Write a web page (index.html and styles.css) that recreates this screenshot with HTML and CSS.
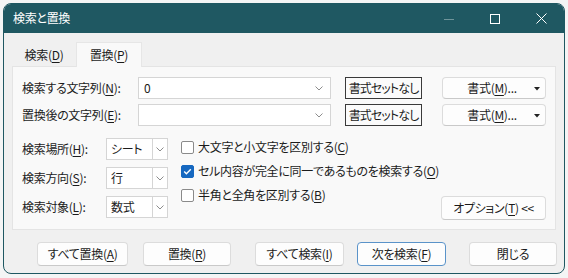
FILE: index.html
```html
<!DOCTYPE html>
<html lang="ja">
<head>
<meta charset="utf-8">
<title>検索と置換</title>
<link rel="stylesheet" href="styles.css">
</head>
<body>
<div class="window">
  <div class="titlebar">
    <span class="title">検索と置換</span>
    <div class="controls">
      <span class="ctl"><svg width="10" height="10" viewBox="0 0 10 10"><line x1="0" y1="5.5" x2="10" y2="5.5" class="dim"/></svg></span>
      <span class="ctl"><svg width="10" height="10" viewBox="0 0 10 10"><rect x="0.5" y="0.5" width="9" height="9" class="stk"/></svg></span>
      <span class="ctl"><svg width="11" height="11" viewBox="0 0 11 11"><path d="M0.5 0.5 L10.5 10.5 M10.5 0.5 L0.5 10.5" class="stk"/></svg></span>
    </div>
  </div>
  <div class="client">
    <div class="tabs">
      <div class="tab">検索(<u>D</u>)</div>
      <div class="tab active">置換(<u>P</u>)</div>
    </div>
    <div class="panel">
      <div class="row">
        <label class="lbl">検索する文字列(<u>N</u>):</label>
        <div class="combo"><span class="val">0</span><svg class="chev" width="8" height="5" viewBox="0 0 8 5"><polyline points="0.5,0.5 4,4 7.5,0.5"/></svg></div>
        <div class="preview">書式セットなし</div>
        <div class="btn fmt"><span>書式(<u>M</u>)...</span><svg class="tri" width="6" height="4" viewBox="0 0 6 4"><polygon points="0,0 6,0 3,3.5"/></svg></div>
      </div>
      <div class="row row2">
        <label class="lbl">置換後の文字列(<u>E</u>):</label>
        <div class="combo"><span class="val"></span><svg class="chev" width="8" height="5" viewBox="0 0 8 5"><polyline points="0.5,0.5 4,4 7.5,0.5"/></svg></div>
        <div class="preview">書式セットなし</div>
        <div class="btn fmt"><span>書式(<u>M</u>)...</span><svg class="tri" width="6" height="4" viewBox="0 0 6 4"><polygon points="0,0 6,0 3,3.5"/></svg></div>
      </div>
      <div class="opts">
        <div class="selects">
          <div class="srow"><label class="slbl">検索場所(<u>H</u>):</label><div class="select"><span class="sval">シート</span><span class="sarr"><svg class="chev" width="8" height="5" viewBox="0 0 8 5"><polyline points="0.5,0.5 4,4 7.5,0.5"/></svg></span></div></div>
          <div class="srow"><label class="slbl">検索方向(<u>S</u>):</label><div class="select"><span class="sval">行</span><span class="sarr"><svg class="chev" width="8" height="5" viewBox="0 0 8 5"><polyline points="0.5,0.5 4,4 7.5,0.5"/></svg></span></div></div>
          <div class="srow"><label class="slbl">検索対象(<u>L</u>):</label><div class="select"><span class="sval">数式</span><span class="sarr"><svg class="chev" width="8" height="5" viewBox="0 0 8 5"><polyline points="0.5,0.5 4,4 7.5,0.5"/></svg></span></div></div>
        </div>
        <div class="checks">
          <div class="chk"><span class="box"></span><span>大文字と小文字を区別する(<u>C</u>)</span></div>
          <div class="chk"><span class="box on"><svg width="13" height="13" viewBox="0 0 13 13"><path d="M3.2 6.6 L5.4 8.8 L9.8 4.3"/></svg></span><span>セル内容が完全に同一であるものを検索する(<u>O</u>)</span></div>
          <div class="chk"><span class="box"></span><span>半角と全角を区別する(<u>B</u>)</span></div>
        </div>
        <div class="btn optbtn">オプション(<u>T</u>) &lt;&lt;</div>
      </div>
    </div>
    <div class="buttons">
      <div class="btn b1">すべて置換(<u>A</u>)</div>
      <div class="btn b2">置換(<u>R</u>)</div>
      <div class="btn b3">すべて検索(<u>I</u>)</div>
      <div class="btn b4 default">次を検索(<u>F</u>)</div>
      <div class="btn b5">閉じる</div>
    </div>
  </div>
</div>
</body>
</html>
```
FILE: styles.css
```css
* { box-sizing: border-box; }
html, body { margin: 0; padding: 0; }
body {
  width: 568px;
  height: 278px;
  overflow: hidden;
  background: #f4f5f5;
  font-family: "Noto Sans CJK JP", "Noto Sans", sans-serif;
  font-size: 12px;
  color: #1b1b1b;
  font-feature-settings: "palt";
  letter-spacing: -0.3px;
  line-height: 1;
  white-space: nowrap;
}
u { text-decoration-thickness: 1px; text-underline-offset: 2px; }

.window {
  margin: 3px 0 0 3px;
  width: 562px;
  height: 271px;
  border: 1px solid #1f5862;
  border-radius: 8px;
  background: #f0f0f0;
  overflow: hidden;
  display: flex;
  flex-direction: column;
}
.titlebar {
  flex: none;
  height: 29px;
  background: #1f5862;
  color: #fff;
  display: flex;
  align-items: center;
}
.title { padding-left: 9px; font-size: 12px; padding-bottom: 1px; }
.controls { margin-left: auto; display: flex; height: 100%; }
.ctl { width: 46px; display: flex; align-items: center; justify-content: center; }
.ctl .stk { fill: none; stroke: #fff; stroke-width: 1; }
.ctl .dim { stroke: #6f949a; stroke-width: 1; }

.client {
  flex: 1;
  padding: 9px 8px 0 8px;
  display: flex;
  flex-direction: column;
}
.tabs { display: flex; align-items: flex-end; height: 24px; }
.tab {
  width: 64px;
  height: 22px;
  display: flex;
  align-items: center;
  justify-content: center;
  padding-bottom: 1px;
}
.tab.active {
  width: 66px;
  height: 25px;
  background: #f9f9f9;
  border: 1px solid #e6e6e6;
  border-bottom: none;
  margin-bottom: -1px;
  position: relative;
  z-index: 1;
}

.panel {
  width: 544px;
  height: 164px;
  background: #f9f9f9;
  border: 1px solid #e4e4e4;
  padding: 10px 9px 0 9px;
}
.row { display: flex; align-items: center; height: 22px; }
.row2 { margin-top: 5px; }
.lbl { width: 116px; flex: none; }
.combo {
  width: 193px;
  height: 22px;
  flex: none;
  background: #fff;
  border: 1px solid #d5d5d5;
  display: flex;
  align-items: center;
  padding: 0 7px 0 5px;
  margin-right: 14px;
}
.combo .val { flex: 1; }
.chev { display: block; }
.chev polyline { fill: none; stroke: #8c8c8c; stroke-width: 1; }
.preview {
  width: 77px;
  height: 22px;
  flex: none;
  border: 1px solid #3a3a3a;
  background: #fbfbfb;
  display: flex;
  align-items: center;
  justify-content: center;
  margin-right: 20px;
  letter-spacing: -0.9px;
}
.btn {
  background: #fdfdfd;
  border: 1px solid #dcdcdc;
  border-bottom-color: #c9c9c9;
  border-radius: 4px;
  display: flex;
  align-items: center;
  justify-content: center;
  flex: none;
}
.fmt { width: 104px; height: 22px; position: relative; }
.fmt span { margin-left: -4px; }
.tri { position: absolute; right: 5px; top: 9px; }
.tri polygon { fill: #222; }

.opts { display: flex; margin-top: 9px; align-items: flex-start; height: 84px; }
.selects { padding-top: 3px; display: flex; flex-direction: column; gap: 7px; flex: none; }
.srow { display: flex; align-items: center; height: 22px; }
.slbl { width: 84px; }
.select {
  width: 62px;
  height: 22px;
  background: #fff;
  border: 1px solid #d5d5d5;
  display: flex;
  align-items: stretch;
}
.sval { flex: 1; display: flex; align-items: center; padding-left: 4px; }
.sarr {
  width: 15px;
  border-left: 1px solid #d5d5d5;
  display: flex;
  align-items: center;
  justify-content: center;
}
.checks { margin-left: 13px; display: flex; flex-direction: column; flex: none; }
.chk { height: 24px; display: flex; align-items: center; gap: 4px; }
.box {
  width: 13px;
  height: 13px;
  border: 1px solid #8a8a8a;
  border-radius: 2px;
  background: #fff;
  flex: none;
}
.box.on { background: #1668c0; border-color: #1668c0; position: relative; }
.box.on svg { position: absolute; left: -1px; top: -1px; }
.box.on path { fill: none; stroke: #fff; stroke-width: 1.4; }
.optbtn { margin-left: auto; align-self: flex-end; width: 105px; height: 24px; margin-bottom: -1px; }

.buttons { display: flex; margin-top: 12px; padding-left: 25px; }
.buttons .btn { height: 24px; }
.b1 { width: 91px; }
.b2 { width: 88px; margin-left: 15px; }
.b3 { width: 89px; margin-left: 24px; }
.b4 { width: 89px; margin-left: 13px; }
.b5 { width: 88px; margin-left: 23px; }
.btn.default { border: 1px solid #5a93c9; }
```
